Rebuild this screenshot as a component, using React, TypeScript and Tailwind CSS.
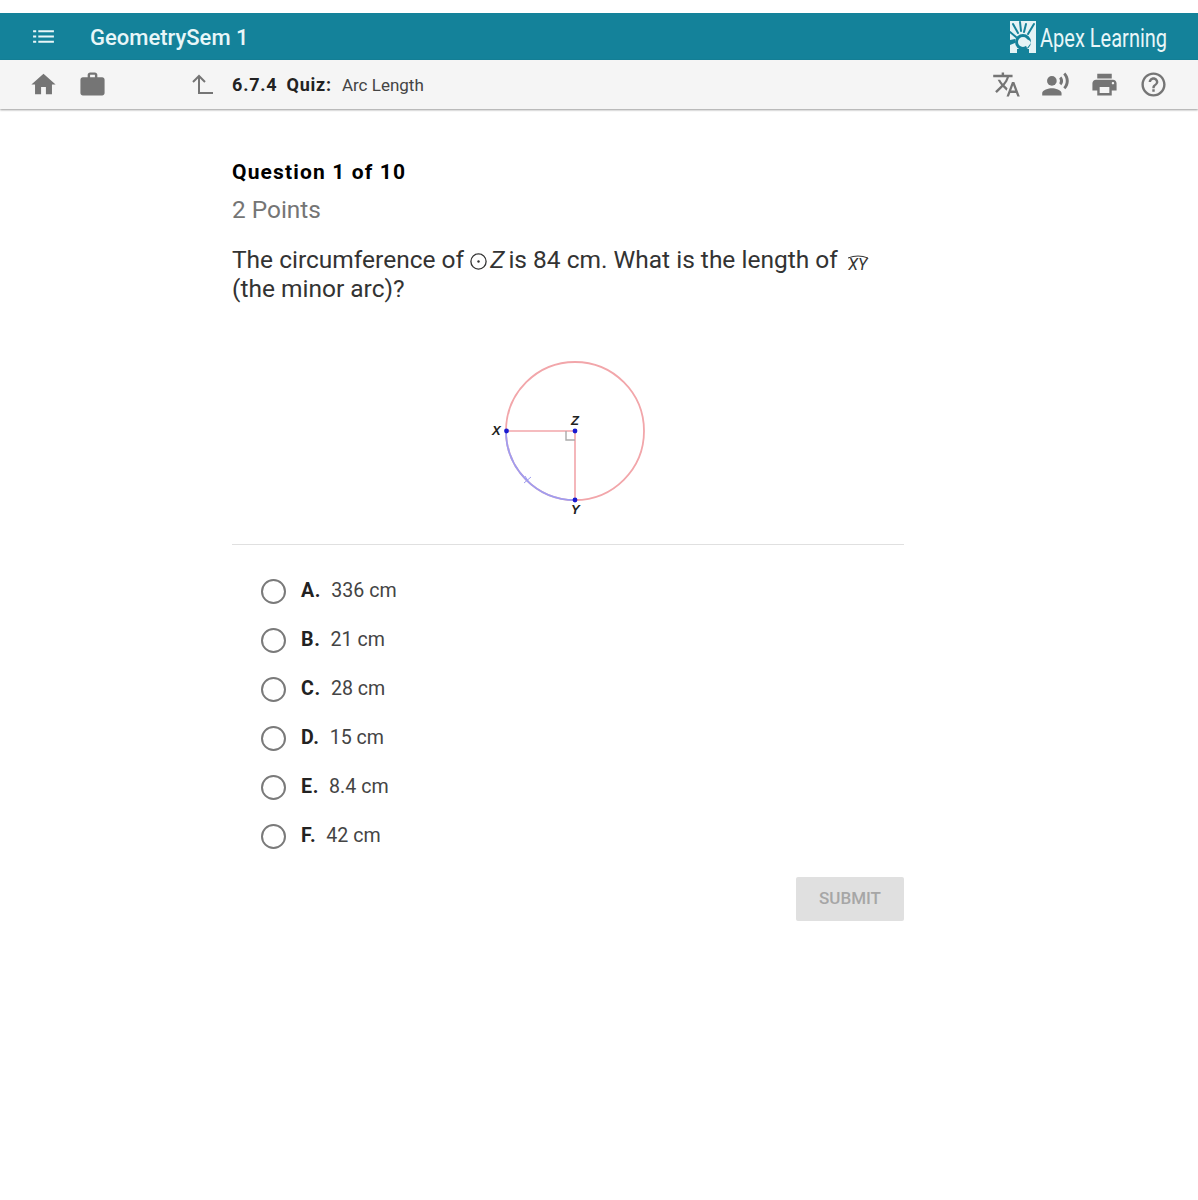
import React from 'react';

const options = [
  { letter: 'A.', text: '336 cm' },
  { letter: 'B.', text: '21 cm' },
  { letter: 'C.', text: '28 cm' },
  { letter: 'D.', text: '15 cm' },
  { letter: 'E.', text: '8.4 cm' },
  { letter: 'F.', text: '42 cm' },
];

const Icon = ({ d, className }: { d: string; className: string }) => (
  <svg viewBox="0 0 24 24" className={className} fill="currentColor">
    <path d={d} />
  </svg>
);

const ApexLogo = () => (
  <svg viewBox="0 0 26 32" className="w-[26px] h-[32px]">
    <rect width="26" height="32" fill="#e4f3f5" />
    <g stroke="#14829a" fill="none" strokeLinecap="round">
      <path d="M3 3 L8 12" strokeWidth="2" />
      <path d="M10 1 L11 10" strokeWidth="2" />
      <path d="M16 3 L14 11" strokeWidth="2" />
      <path d="M24 3 L18 13" strokeWidth="2" />
      <path d="M0 11 L6 16" strokeWidth="2" />
      <circle cx="13" cy="21" r="6.5" strokeWidth="3" />
    </g>
    <path d="M14 20 a4 4 0 0 1 7 2 l-4 5 z" fill="#e4f3f5" />
    <path d="M0 19 L5 18 L5 22 L0 24z" fill="#14829a" />
    <path d="M7 28 h12 v4 H7z" fill="#14829a" />
  </svg>
);

const Diagram = () => (
  <svg viewBox="0 0 190 170" className="w-[190px] h-[170px]">
    <circle cx="105" cy="81" r="69" fill="none" stroke="#f2a6aa" strokeWidth="1.8" />
    <path d="M36 81 A69 69 0 0 0 105 150" fill="none" stroke="#9f9df0" strokeWidth="1.8" />
    <path d="M36 81 H105 V150" fill="none" stroke="#f2a6aa" strokeWidth="1.6" />
    <path d="M96 81 V90 H105" fill="none" stroke="#aaaaaa" strokeWidth="1.4" />
    <path d="M55 126 L60 134 M54 133 L61 127" fill="none" stroke="#9f9df0" strokeWidth="1" />
    <circle cx="36.5" cy="81" r="2.4" fill="#1a1ad0" />
    <circle cx="105" cy="81" r="2.4" fill="#1a1ad0" />
    <circle cx="105" cy="150" r="2.4" fill="#1a1ad0" />
    <text x="22" y="85" fontSize="13" fontWeight="700" fontStyle="italic" fontFamily="Liberation Sans" fill="#222">X</text>
    <text x="101" y="75" fontSize="13" fontWeight="700" fontStyle="italic" fontFamily="Liberation Sans" fill="#222">Z</text>
    <text x="101" y="164" fontSize="13" fontWeight="700" fontStyle="italic" fontFamily="Liberation Sans" fill="#222">Y</text>
  </svg>
);

export default function App() {
  return (
    <div className="min-h-[1200px] bg-white font-['Roboto',sans-serif] pt-[13px]">
      {/* Top bar */}
      <header className="h-[47px] bg-[#14829a] flex items-center pl-[31px] pr-[30px] text-[#e8f6f8]">
        <svg viewBox="0 0 24 24" className="w-[25px] h-[25px]" fill="currentColor">
          <path d="M7 6h15v2H7zM7 11h15v2H7zM7 16h15v2H7zM2 6h3v2H2zM2 11h3v2H2zM2 16h3v2H2z" />
        </svg>
        <span className="ml-[34px] mt-[1px] text-[22px] font-medium">GeometrySem 1</span>
        <div className="ml-auto flex items-center">
          <ApexLogo />
          <span className="ml-[4px] mt-[3px] w-[128px] text-[26px] origin-left scale-x-[0.77] whitespace-nowrap">Apex Learning</span>
        </div>
      </header>

      {/* Lesson bar */}
      <div className="h-[49px] bg-[#f5f5f5] shadow-[0_1px_2px_rgba(0,0,0,0.4)] flex items-center pl-[29px] pr-[30px] text-[#757575]">
        <Icon className="w-[29px] h-[29px]" d="M10 20v-6h4v6h5v-8h3L12 3 2 12h3v8z" />
        <Icon className="ml-[20px] w-[29px] h-[29px]" d="M20 6h-4V4c0-1.11-.89-2-2-2h-4c-1.11 0-2 .89-2 2v2H4c-1.11 0-1.99.89-1.99 2L2 19c0 1.11.89 2 2 2h16c1.11 0 2-.89 2-2V8c0-1.11-.89-2-2-2zm-6 0h-4V4h4v2z" />
        <svg viewBox="0 0 24 24" className="ml-[83px] w-[24px] h-[24px]" fill="none" stroke="currentColor" strokeWidth="2">
          <path d="M3 9 L9 3 L15 9 M9 3 V20 H23" />
        </svg>
        <div className="ml-[18px] text-[18px] text-[#222] flex items-baseline">
          <span className="font-bold tracking-[0.8px]">6.7.4</span>
          <span className="ml-[9px] font-bold tracking-[0.8px]">Quiz:</span>
          <span className="ml-[10px] text-[17px] text-[#444]">Arc Length</span>
        </div>
        <div className="ml-auto flex items-center gap-[20px]">
          <Icon className="w-[29px] h-[29px]" d="M12.87 15.07l-2.54-2.51.03-.03c1.74-1.94 2.98-4.17 3.71-6.53H17V4h-7V2H8v2H1v1.99h11.17C11.5 7.92 10.44 9.75 9 11.35 8.07 10.32 7.3 9.19 6.69 8h-2c.73 1.63 1.73 3.17 2.98 4.56l-5.09 5.02L4 19l5-5 3.11 3.11.76-2.04zM18.5 10h-2L12 22h2l1.12-3h4.75L21 22h2l-4.5-12zm-2.62 7l1.62-4.33L19.12 17h-3.24z" />
          <svg viewBox="0 0 24 24" className="w-[29px] h-[29px]" fill="currentColor">
            <circle cx="9" cy="9" r="4" />
            <path d="M9 15c-2.67 0-8 1.34-8 4v2h16v-2c0-2.66-5.33-4-8-4zm7.76-9.64l-1.68 1.69c.84 1.18.84 2.71 0 3.89l1.68 1.69c2.02-2.02 2.02-5.07 0-7.27zM20.07 2l-1.63 1.63c2.77 3.02 2.77 7.56 0 10.74L20.07 16c3.9-3.89 3.91-9.95 0-14z" />
          </svg>
          <Icon className="w-[29px] h-[29px]" d="M19 8H5c-1.66 0-3 1.34-3 3v6h4v4h12v-4h4v-6c0-1.66-1.34-3-3-3zm-3 11H8v-5h8v5zm3-7c-.55 0-1-.45-1-1s.45-1 1-1 1 .45 1 1-.45 1-1 1zm-1-9H6v4h12V3z" />
          <Icon className="w-[29px] h-[29px]" d="M11 18h2v-2h-2v2zm1-16C6.48 2 2 6.48 2 12s4.48 10 10 10 10-4.48 10-10S17.52 2 12 2zm0 18c-4.41 0-8-3.59-8-8s3.59-8 8-8 8 3.59 8 8-3.59 8-8 8zm0-14c-2.21 0-4 1.79-4 4h2c0-1.1.9-2 2-2s2 .9 2 2c0 2-3 1.75-3 5h2c0-2.25 3-2.5 3-5 0-2.21-1.79-4-4-4z" />
        </div>
      </div>

      {/* Question */}
      <main className="ml-[232px] w-[672px] pt-[49px]">
        <h1 className="text-[21px] leading-[28px] font-bold text-black tracking-[1.15px]">Question 1 of 10</h1>
        <p className="mt-[10px] text-[24.4px] leading-[28px] text-[#757575]">2 Points</p>
        <p className="mt-[21px] text-[24.5px] leading-[29px] text-[#333]">
          The circumference of{' '}
          <span className="inline-block w-[19px] h-[19px] align-[-3px] ml-[-1px] mr-[2px]">
            <svg viewBox="0 0 19 19" className="w-[19px] h-[19px]" fill="none" stroke="#333" strokeWidth="1.3">
              <circle cx="9.5" cy="9.5" r="7.6" />
              <circle cx="9.5" cy="9.5" r="1.2" fill="#333" stroke="none" />
            </svg>
          </span>
          <span className="italic">Z</span>
          <span className="ml-[4px]">is 84 cm. What is the length of </span>
          <span className="relative inline-block w-[26px] h-[16px] ml-[1px] font-['Roboto'] italic text-[16px] leading-[16px] align-[-2px] text-center">
            XY
            <svg viewBox="0 0 26 6" className="absolute left-0 top-[-3px] w-[26px] h-[6px]" fill="none" stroke="#333" strokeWidth="1">
              <path d="M3 4 Q13 0 23 4" />
            </svg>
          </span>
          <br />
          (the minor arc)?
        </p>

        <div className="mt-[47px] ml-[238px] h-[170px]">
          <Diagram />
        </div>

        <div className="mt-[24px] border-t border-[#e0e0e0] pt-[20px] pl-[29px]">
          {options.map((o) => (
            <div key={o.letter} className="h-[49px] flex items-start">
              <span className="mt-[14px] w-[25px] h-[25px] rounded-full border-[2.5px] border-[#7a7a7a]" />
              <div className="ml-[15px] mt-[13.5px] text-[19.6px] leading-[24px] flex">
                <span className="font-bold text-[#222] tracking-[0.7px]">{o.letter}</span>
                <span className="ml-[10px] text-[#444]">{o.text}</span>
              </div>
            </div>
          ))}
        </div>

        <div className="mt-[18px] flex justify-end">
          <button className="w-[108px] h-[44px] bg-[#e0e0e0] rounded-[2px] text-[17px] font-medium text-[#a6a6a6]">SUBMIT</button>
        </div>
      </main>
    </div>
  );
}
